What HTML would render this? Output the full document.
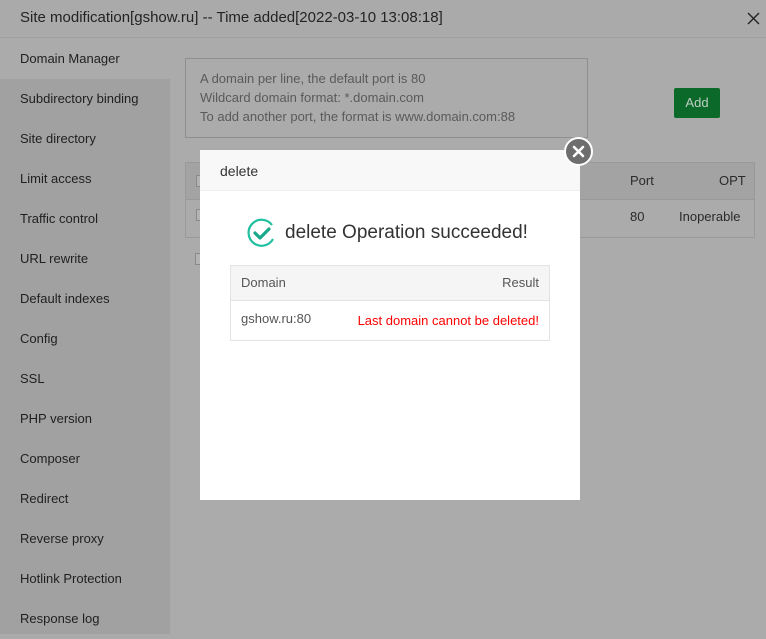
<!DOCTYPE html>
<html><head><meta charset="utf-8"><style>
*{box-sizing:border-box;margin:0;padding:0}
body{width:766px;height:634px;overflow:hidden;background:#ababab;font-family:"Liberation Sans",sans-serif;position:relative;color:#2a2a2a}
.hdr{position:absolute;left:0;top:0;width:766px;height:38px;background:#aaaaaa;border-bottom:1px solid #9e9e9e;font-size:15px;line-height:36px;padding-left:20px;color:#232323}
.side{position:absolute;left:0;top:39px;width:170px;height:595px;background:#a1a1a1}
.side div{height:40px;line-height:40px;padding-left:20px;font-size:13px;color:#1f1f1f}
.side .act{background:#ababab}
.ta{position:absolute;left:185px;top:58px;width:403px;height:80px;border:1px solid #8f8f8f;padding:10px 14px;font-size:13px;line-height:19px;color:#5a5a5a}
.add{position:absolute;left:674px;top:88px;width:46px;height:30px;background:#0b6a2a;color:#bfcfc3;font-size:13px;line-height:30px;text-align:center;border-radius:2px}
.tbl{position:absolute;left:185px;top:162px;width:570px;height:76px;border:1px solid #999}
.tbl .r1{height:37px;border-bottom:1px solid #999;background:#a3a3a3}
.cell{position:absolute;font-size:13px;color:#2a2a2a}
.cb{position:absolute;width:12px;height:12px;border:1px solid #8a8a8a;background:#b3b3b3}
.dlg{position:absolute;left:200px;top:150px;width:380px;height:350px;background:#fff}
.dh{height:41px;background:#f8f8f8;border-bottom:1px solid #eee;font-size:14px;line-height:42px;padding-left:20px;color:#333}
.msg{position:absolute;left:85px;top:72px;font-size:19px;color:#333}
.rt{position:absolute;left:30px;top:115px;width:320px;height:76px;border:1px solid #e3e3e3;font-size:13px}
.rt .h{height:35px;background:#f5f5f5;border-bottom:1px solid #e3e3e3;line-height:34px;padding:0 10px;color:#555}
.close{position:absolute;left:564px;top:137px;width:29px;height:29px;border-radius:50%;background:#6e6e6e;border:2px solid #fff}
</style></head><body>
<div class="hdr">Site modification[gshow.ru] -- Time added[2022-03-10 13:08:18]<svg style="position:absolute;right:6px;top:12px" width="13" height="13" viewBox="0 0 13 13"><path d="M1 1l11 11M12 1L1 12" stroke="#222" stroke-width="1.4"/></svg></div>
<div class="side">
<div class="act">Domain Manager</div><div>Subdirectory binding</div><div>Site directory</div><div>Limit access</div><div>Traffic control</div><div>URL rewrite</div><div>Default indexes</div><div>Config</div><div>SSL</div><div>PHP version</div><div>Composer</div><div>Redirect</div><div>Reverse proxy</div><div>Hotlink Protection</div><div>Response log</div>
</div>
<div class="ta">A domain per line, the default port is 80<br>Wildcard domain format: *.domain.com<br>To add another port, the format is www.domain.com:88</div>
<div class="add">Add</div>
<div class="tbl"><div class="r1"></div>
<span class="cell" style="left:444px;top:10px">Port</span><span class="cell" style="left:533px;top:10px">OPT</span>
<span class="cell" style="left:444px;top:46px">80</span><span class="cell" style="left:493px;top:46px">Inoperable</span>
<span class="cb" style="left:10px;top:12px"></span><span class="cb" style="left:10px;top:46px"></span></div>
<span class="cb" style="left:195px;top:253px"></span>
<div class="dlg"><div class="dh">delete</div>
<svg style="position:absolute;left:46px;top:67px" width="31" height="31" viewBox="0 0 31 31"><path d="M26 8A13 13 0 1 0 27 22" fill="none" stroke="#20c0a0" stroke-width="2.2"/><path d="M9 16l5 5 9-9" fill="none" stroke="#1aa88a" stroke-width="3.2" stroke-linecap="round" stroke-linejoin="round"/></svg>
<div class="msg">delete Operation succeeded!</div>
<div class="rt"><div class="h">Domain<span style="float:right">Result</span></div>
<div style="padding:10px 10px;color:#555">gshow.ru:80<span style="float:right;color:#f00;margin-top:2px">Last domain cannot be deleted!</span></div></div>
</div>
<div class="close"><svg width="25" height="25" viewBox="0 0 25 25"><path d="M8 8l9 9M17 8l-9 9" stroke="#fff" stroke-width="2.6" stroke-linecap="round"/></svg></div>
</body></html>
